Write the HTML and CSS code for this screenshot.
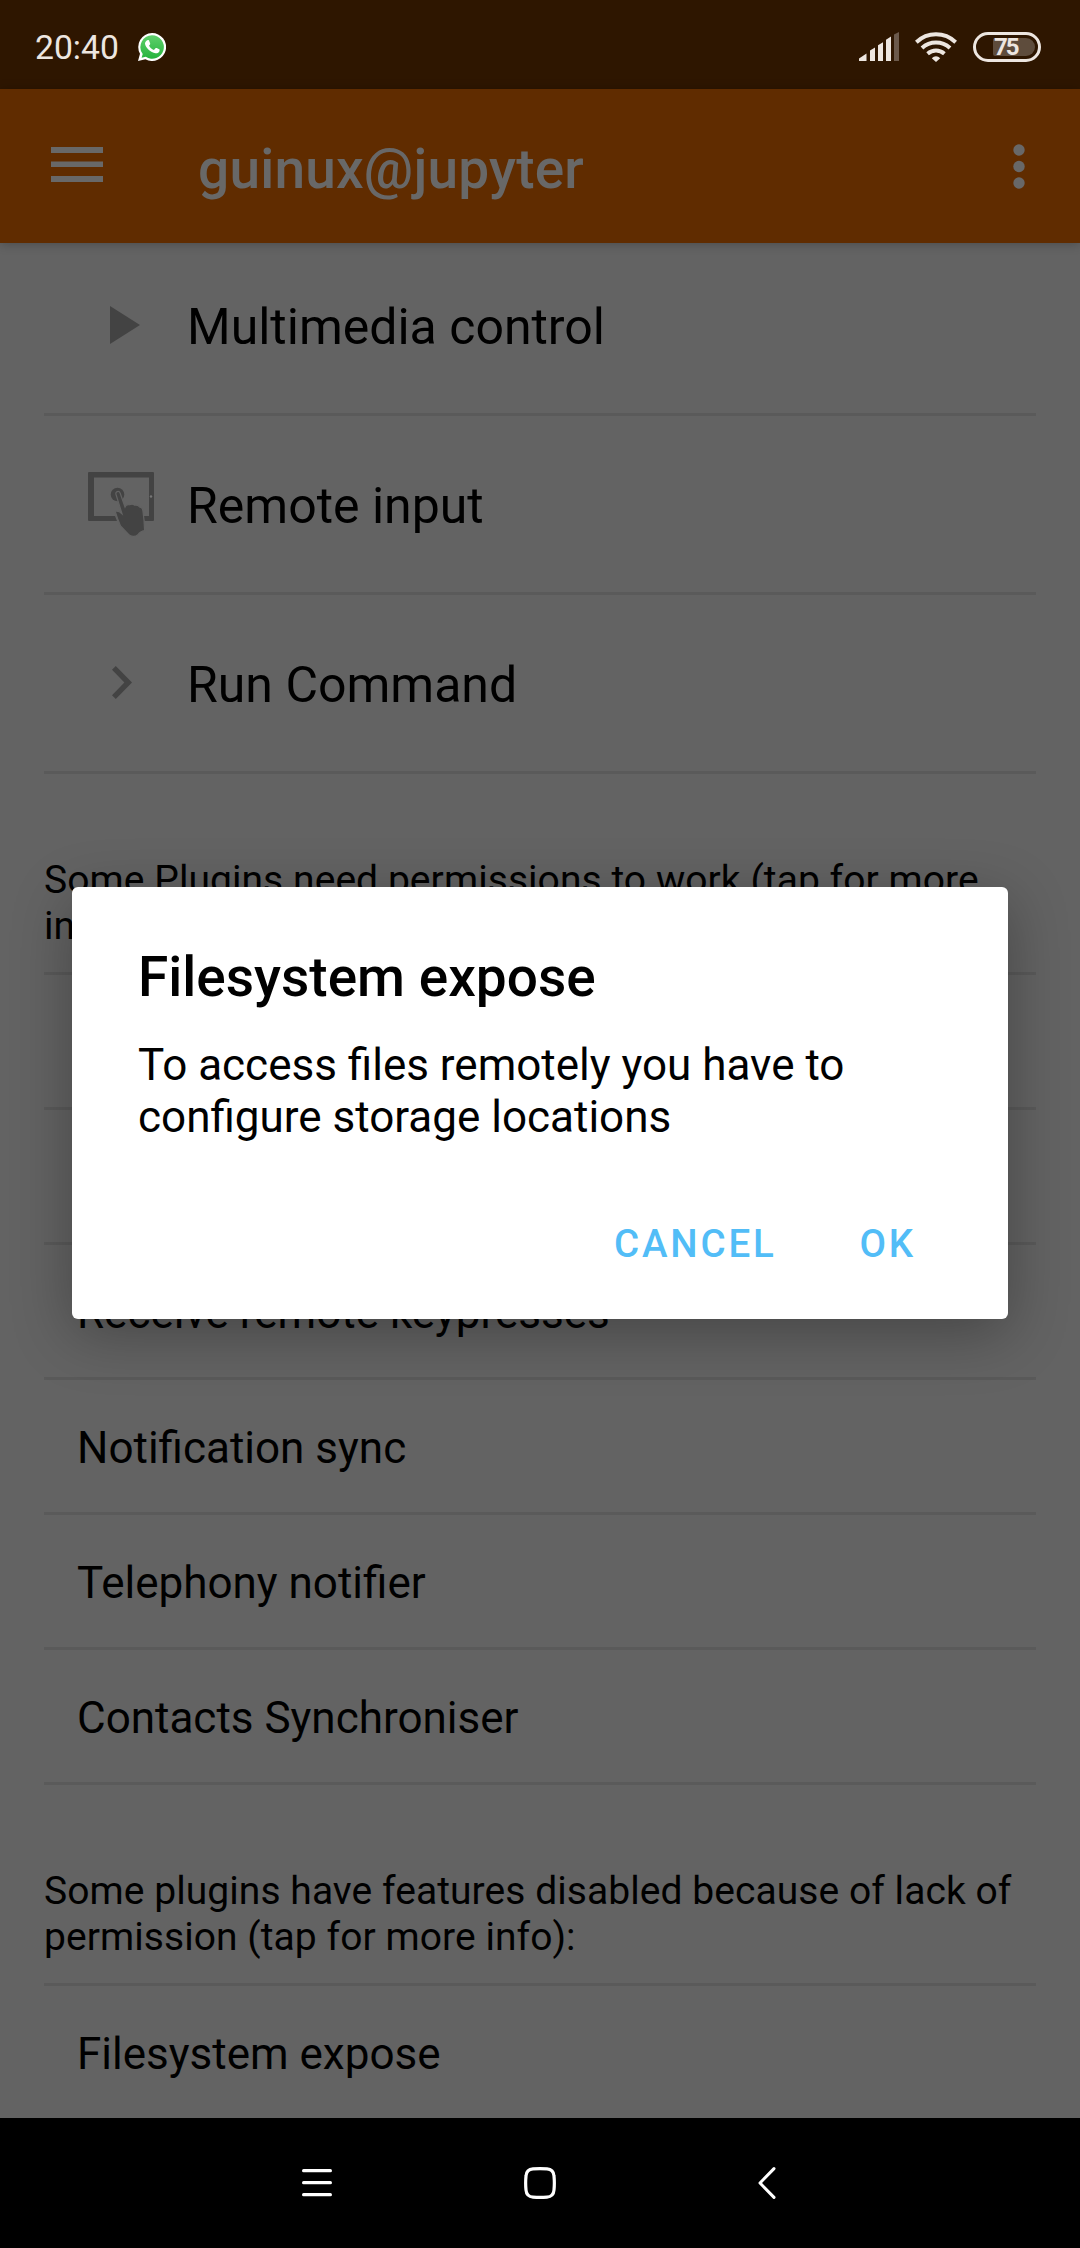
FILE: index.html
```html
<!DOCTYPE html>
<html lang="en">
<head>
<meta charset="utf-8">
<title>guinux@jupyter</title>
<link rel="stylesheet" href="styles.css">
</head>
<body>
<div class="screen">
  <header class="status">
    <span class="clock">20:40</span>
    <svg class="chat" width="28" height="28" viewBox="0 0 28 28">
      <defs><linearGradient id="g" x1="0" y1="0" x2="0" y2="1"><stop offset="0" stop-color="#5fd06c"/><stop offset="1" stop-color="#27b43e"/></linearGradient></defs>
      <path fill="#fff" d="M14 0a14 14 0 1 1-6.6 26.300L0 28l2-7.200A14 14 0 0 1 14 0z"/>
      <path fill="url(#g)" d="M14 2.300a11.700 11.700 0 1 1-6.200 21.500L3.600 24.800l1.100-3.900A11.700 11.700 0 0 1 14 2.300z"/>
      <path fill="#fff" d="M9.400 7.200c.5-.2 1.300-.2 1.600.4l1.200 2.800c.2.500-.1 1-1.200 2.200.9 2 2.800 3.600 4.900 4.500l1.600-1.900c.3-.4.700-.4 1.200-.1l2.500 1.200c.6.300.5.800.3 1.600-.4 1.600-2.400 2.500-4 2.300-4.800-.7-10-5.300-10.500-9.400-.1-1.600 1-3 2.400-3.600z"/>
    </svg>
    <div class="indicators">
      <svg width="40" height="30" viewBox="0 0 40 30" fill="#ede6e0">
        <path d="M0 29v-2.500L7.500 21.500V29zM11 29V18.500l5-3V29zM19 29V13.200l5-3V29zM27 29V7.700l5-3.200V29z"/>
        <path fill="#6b594b" d="M35 29V2.400L40 0v29z"/>
      </svg>
      <svg class="wifi" width="42" height="30" viewBox="0 0 42 30" fill="none" stroke="#ede6e0" stroke-width="4">
        <path d="M1.300 10.200C12.500-.4 29.500-.4 40.700 10.200M7 16c8-7.200 20-7.200 28 0M12.600 21.700c5-4.300 11.800-4.300 16.800 0"/>
        <path fill="#ede6e0" stroke="none" d="M16.800 26.300c2.400-2.800 6-2.800 8.400 0L21 30z"/>
      </svg>
      <div class="battery"><span class="charge">75</span></div>
    </div>
  </header>
  <div class="appbar">
    <svg class="menu" width="52" height="35" viewBox="0 0 52 35" fill="#686868"><path d="M0 0h52v6H0zM0 14.500h52v5.500H0zM0 29h52v6H0z"/></svg>
    <h1 class="title">guinux@jupyter</h1>
    <svg width="12" height="45" viewBox="0 0 12 45" fill="#686868"><circle cx="6" cy="6" r="5.700"/><circle cx="6" cy="22.500" r="5.700"/><circle cx="6" cy="39" r="5.700"/></svg>
  </div>
  <main class="content">
    <div class="row action first">
      <svg class="icon" viewBox="0 0 66 66"><path d="M22 14l30 19-30 19z"/></svg>
      <span class="label">Multimedia control</span>
    </div>
    <div class="row action">
      <svg class="icon" viewBox="0 0 66 66">
        <path fill-rule="evenodd" d="M1 1h64q1 0 1 1v47q0 1-1 1h-8.500l-1.500-5h6V6.500H6V45h21l2 5H1q-1 0-1-1V2q0-1 1-1z"/>
        <circle cx="29.500" cy="23.500" r="6.800"/>
        <path stroke="#636363" stroke-width="1.200" d="M28 23.500c-1-3 3-4.300 4.200-1.300L37 36c.8-2 2.500-2.800 4.500-2.200 2-1.100 4-.7 5 .4 2.500-.5 4 .3 4.800 1.600 2.400.4 3.500 2 3.600 4L56 49l.6 10.500c-3.600.4-5.400 2.300-7 4.500-2.400 2.200-7 1.500-9-.5L32.500 55l-3-7.500-2.300-7.200c2.800-.7 4.800.5 6.800 2.400L28 23.500z"/>
        <circle cx="63" cy="25.500" r="1.200" fill="#777"/>
      </svg>
      <span class="label">Remote input</span>
    </div>
    <div class="row action">
      <svg class="icon" viewBox="0 0 66 66"><path d="M27.800 16L44 32.500 27.800 49 24 45.200 36.400 32.500 24 19.800z"/></svg>
      <span class="label">Run Command</span>
    </div>
    <p class="note">Some Plugins need permissions to work (tap for more<br>info):</p>
    <div class="row"></div>
    <div class="row"></div>
    <div class="row"><span class="label">Receive remote keypresses</span></div>
    <div class="row"><span class="label">Notification sync</span></div>
    <div class="row"><span class="label">Telephony notifier</span></div>
    <div class="row"><span class="label">Contacts Synchroniser</span></div>
    <p class="note">Some plugins have features disabled because of lack of<br>permission (tap for more info):</p>
    <div class="row last"><span class="label">Filesystem expose</span></div>
  </main>
  <nav class="navbar">
    <svg width="30" height="32" viewBox="0 0 30 32" stroke="#fff" stroke-width="3.200" stroke-linecap="round"><path d="M1.600 3.700h26.800M1.600 15.700h26.800M1.600 27.700h26.800"/></svg>
    <svg class="home" width="32" height="32" viewBox="0 0 32 32" fill="none" stroke="#fff" stroke-width="3.200"><path d="M9 1.900Q16 1.400 23 1.900Q29.500 2.300 30 9Q30.700 16 30 23Q29.500 29.700 23 30.100Q16 30.600 9 30.100Q2.500 29.700 2 23Q1.300 16 2 9Q2.500 2.300 9 1.900z"/></svg>
    <svg width="18" height="32" viewBox="0 0 18 32" fill="none" stroke="#fff" stroke-width="3" stroke-linecap="round" stroke-linejoin="round"><path d="M16 1.600L2 16l14 14.400"/></svg>
  </nav>
  <section class="dialog">
    <h2 class="dialog-title">Filesystem expose</h2>
    <p class="dialog-text">To access files remotely you have to<br>configure storage locations</p>
    <div class="dialog-actions"><span>CANCEL</span><span>OK</span></div>
  </section>
</div>
</body>
</html>
```
FILE: styles.css
```css
* { box-sizing: border-box; }
body, h1, h2, p { margin: 0; }
body { font-family: Roboto, sans-serif; color: #000; background: #000; }
svg { display: block; flex: none; }

.screen {
  position: relative;
  display: flex;
  flex-direction: column;
  width: 1080px;
  height: 2248px;
  overflow: hidden;
  background: #636363;
}

.status {
  display: flex;
  align-items: center;
  height: 89px;
  padding: 5px 39px 0 35px;
  background: #2e1600;
  color: #ede6e0;
}
.clock { font-size: 33.7px; line-height: 42px; width: 103px; padding-top: 1px; }
.indicators { display: flex; align-items: center; margin-left: auto; }
.wifi { margin: 0 16px; }
.battery {
  display: flex;
  width: 68px;
  height: 30px;
  padding: 3px 3px 3px 17px;
  border: 3px solid #ede6e0;
  border-radius: 15px;
}
.charge {
  width: 42px;
  height: 18px;
  padding-left: 1px;
  border-radius: 2px 9px 9px 2px;
  background: #5e4c3c;
  font-size: 24px;
  font-weight: 700;
  line-height: 18px;
  letter-spacing: -2px;
}

.appbar {
  position: relative;
  display: flex;
  align-items: center;
  height: 154px;
  padding: 0 55px 0 51px;
  background: #602c00;
  color: #686868;
  box-shadow: 0 1px 10px rgba(0, 0, 0, .25);
}
.menu { margin-top: -3px; }
.title {
  flex: 1;
  padding: 6px 0 0 95px;
  font-size: 55px;
  font-weight: 500;
  line-height: 64px;
  letter-spacing: .2px;
}

.content { display: flex; flex-direction: column; height: 1875px; padding: 0 44px; }
.row {
  display: flex;
  align-items: center;
  flex: none;
  height: 135px;
  padding-left: 33px;
  border-bottom: 3px solid #5a5a5a;
  font-size: 44px;
  line-height: 52px;
}
.row .label { padding-top: 4px; }
.row.last { height: 132px; border: 0; }
.row.action { height: 179px; padding-left: 44px; gap: 33px; font-size: 50px; line-height: 58px; }
.row.first { height: 173px; padding-bottom: 6px; }
.icon { width: 66px; height: 66px; fill: #434343; }
.note {
  flex: none;
  height: 201px;
  padding-top: 83px;
  border-bottom: 3px solid #5a5a5a;
  font-size: 39px;
  line-height: 46px;
  letter-spacing: .06px;
  white-space: nowrap;
}

.navbar {
  display: flex;
  align-items: center;
  justify-content: space-between;
  height: 130px;
  padding: 0 304px 0 302px;
  background: #000;
}
.home { margin: 0 5px 0 -5px; }

.dialog {
  position: absolute;
  top: 887px;
  left: 72px;
  width: 936px;
  height: 432px;
  padding: 58px 66px 0;
  border-radius: 6px;
  background: #fff;
  box-shadow: 0 14px 60px rgba(0, 0, 0, .3);
}
.dialog-title { font-size: 55px; font-weight: 500; line-height: 64px; }
.dialog-text { margin-top: 30px; font-size: 44px; line-height: 52px; white-space: nowrap; }
.dialog-actions {
  display: flex;
  justify-content: flex-end;
  gap: 83px;
  margin-top: 78px;
  padding-right: 26px;
  color: #52bdf7;
  font-size: 38.5px;
  font-weight: 500;
  line-height: 46px;
  letter-spacing: 2.8px;
}
```
